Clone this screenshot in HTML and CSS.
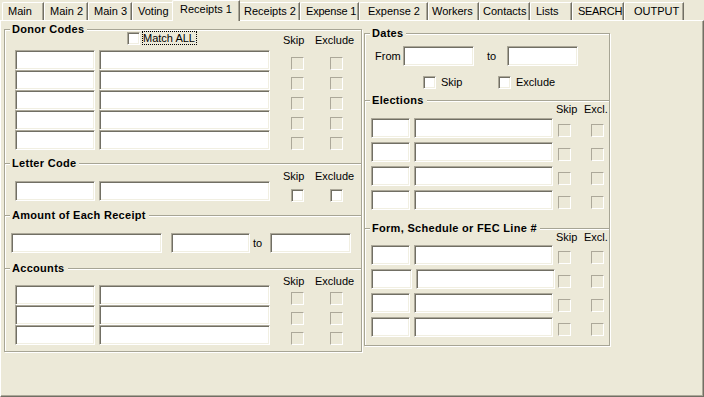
FILE: index.html
```html
<!DOCTYPE html>
<html lang="en">
<head>
  <meta charset="UTF-8" />
  <title>Receipts 1</title>
  <link rel="stylesheet" href="styles.css">
</head>
<body>

<div class="tabs">
  <div class="tab">Main</div>
  <div class="tab">Main 2</div>
  <div class="tab">Main 3</div>
  <div class="tab">Voting</div>
  <div class="tab active">Receipts 1</div>
  <div class="tab">Receipts 2</div>
  <div class="tab">Expense 1</div>
  <div class="tab">Expense 2</div>
  <div class="tab">Workers</div>
  <div class="tab">Contacts</div>
  <div class="tab">Lists</div>
  <div class="tab">SEARCH</div>
  <div class="tab">OUTPUT</div>
</div>

<div class="page">

  <!-- left column: donor codes, letter code, amount, accounts -->
  <div class="group group-left">
    <div class="legend first"><span>Donor Codes</span></div>
    <div class="lhead donor-head">
      <span></span>
      <label class="match">
        <input type="checkbox" class="check on">
        <span class="focus">Match ALL</span>
      </label>
      <span class="lbl-skip">Skip</span>
      <span class="lbl-excl">Exclude</span>
    </div>
    <div class="lrow"><input class="field code" type="text"><input class="field desc" type="text"><input type="checkbox" class="check skip"><input type="checkbox" class="check excl"></div>
    <div class="lrow"><input class="field code" type="text"><input class="field desc" type="text"><input type="checkbox" class="check skip"><input type="checkbox" class="check excl"></div>
    <div class="lrow"><input class="field code" type="text"><input class="field desc" type="text"><input type="checkbox" class="check skip"><input type="checkbox" class="check excl"></div>
    <div class="lrow"><input class="field code" type="text"><input class="field desc" type="text"><input type="checkbox" class="check skip"><input type="checkbox" class="check excl"></div>
    <div class="lrow"><input class="field code" type="text"><input class="field desc" type="text"><input type="checkbox" class="check skip"><input type="checkbox" class="check excl"></div>

    <div class="legend letter-legend"><span>Letter Code</span></div>
    <div class="lhead letter-head">
      <span></span><span></span>
      <span class="lbl-skip">Skip</span>
      <span class="lbl-excl">Exclude</span>
    </div>
    <div class="lrow letter"><input class="field code" type="text"><input class="field desc" type="text"><input type="checkbox" class="check on skip"><input type="checkbox" class="check on excl"></div>

    <div class="legend amount-legend"><span>Amount of Each Receipt</span></div>
    <div class="amount-row">
      <input class="field amt1" type="text">
      <input class="field amt2" type="text">
      <span class="to">to</span>
      <input class="field amt3" type="text">
    </div>

    <div class="legend accounts-legend"><span>Accounts</span></div>
    <div class="lhead accounts-head">
      <span></span><span></span>
      <span class="lbl-skip">Skip</span>
      <span class="lbl-excl">Exclude</span>
    </div>
    <div class="lrow"><input class="field code" type="text"><input class="field desc" type="text"><input type="checkbox" class="check skip"><input type="checkbox" class="check excl"></div>
    <div class="lrow"><input class="field code" type="text"><input class="field desc" type="text"><input type="checkbox" class="check skip"><input type="checkbox" class="check excl"></div>
    <div class="lrow"><input class="field code" type="text"><input class="field desc" type="text"><input type="checkbox" class="check skip"><input type="checkbox" class="check excl"></div>
  </div>

  <!-- right column: dates, elections, form lines -->
  <div class="group group-right">
    <div class="legend first"><span>Dates</span></div>
    <div class="dates-row">
      <span class="from">From</span>
      <input class="field date" type="text">
      <span class="date-to">to</span>
      <input class="field date" type="text">
    </div>
    <div class="dates-opts">
      <label class="opt opt-skip"><input type="checkbox" class="check on">Skip</label>
      <label class="opt"><input type="checkbox" class="check on">Exclude</label>
    </div>

    <div class="legend elections-legend"><span>Elections</span></div>
    <div class="rhead">
      <span></span><span></span>
      <span>Skip</span>
      <span>Excl.</span>
    </div>
    <div class="rrow first-row"><input class="field code" type="text"><input class="field desc" type="text"><input type="checkbox" class="check skip"><input type="checkbox" class="check excl"></div>
    <div class="rrow"><input class="field code" type="text"><input class="field desc" type="text"><input type="checkbox" class="check skip"><input type="checkbox" class="check excl"></div>
    <div class="rrow"><input class="field code" type="text"><input class="field desc" type="text"><input type="checkbox" class="check skip"><input type="checkbox" class="check excl"></div>
    <div class="rrow"><input class="field code" type="text"><input class="field desc" type="text"><input type="checkbox" class="check skip"><input type="checkbox" class="check excl"></div>

    <div class="legend form-legend"><span>Form, Schedule or FEC Line #</span></div>
    <div class="rhead">
      <span></span><span></span>
      <span>Skip</span>
      <span>Excl.</span>
    </div>
    <div class="rrow form-first"><input class="field code" type="text"><input class="field desc" type="text"><input type="checkbox" class="check skip"><input type="checkbox" class="check excl"></div>
    <div class="rrow wide"><input class="field code" type="text"><input class="field desc" type="text"><input type="checkbox" class="check skip"><input type="checkbox" class="check excl"></div>
    <div class="rrow"><input class="field code" type="text"><input class="field desc" type="text"><input type="checkbox" class="check skip"><input type="checkbox" class="check excl"></div>
    <div class="rrow"><input class="field code" type="text"><input class="field desc" type="text"><input type="checkbox" class="check skip"><input type="checkbox" class="check excl"></div>
  </div>

</div>

</body>
</html>
```

FILE: styles.css
```css
body {
  margin: 0;
  width: 704px;
  height: 397px;
  overflow: hidden;
  background-color: #ece9d8;
  color: #000;
  font-family: "Liberation Sans", Arial, sans-serif;
  font-size: 11px;
  line-height: 13px;
}

/* tab strip */
.tabs {
  display: flex;
  align-items: flex-end;
  height: 20px;
  padding-left: 2px;
}

.tab {
  box-sizing: border-box;
  height: 18px;
  padding: 2px 0 0 5px;
  border-top: 1px solid #fff;
  border-left: 1px solid #fff;
  border-right: 1px solid #716f64;
  border-top-left-radius: 2px;
  box-shadow: inset -1px 0 0 #aca899;
  white-space: nowrap;
  background-color: #ece9d8;
}

.tab.active {
  height: 21px;
  margin: 0 -2px -1px;
  padding-left: 7px;
  position: relative;
  z-index: 1;
}

/* tab widths, taken from the original form */
.tab:nth-child(1) { width: 42px; }
.tab:nth-child(2) { width: 44px; }
.tab:nth-child(3) { width: 44px; }
.tab:nth-child(4) { width: 42px; }
.tab:nth-child(5) { width: 68px; }
.tab:nth-child(6) { width: 62px; }
.tab:nth-child(7) { width: 59px; letter-spacing: -0.2px; }
.tab:nth-child(8) { width: 69px; padding-left: 8px; }
.tab:nth-child(9) { width: 51px; padding-left: 3px; }
.tab:nth-child(10) { width: 51px; padding-left: 3px; }
.tab:nth-child(11) { width: 42px; }
.tab:nth-child(12) { width: 52px; letter-spacing: -0.3px; }
.tab:nth-child(13) { width: 60px; padding-left: 9px; }

.page {
  box-sizing: border-box;
  height: 377px;
  border-top: 1px solid #fff;
  border-left: 1px solid #fff;
  border-right: 1px solid #716f64;
  border-bottom: 1px solid #716f64;
  box-shadow: inset -1px -1px 0 #aca899;
  display: flex;
  align-items: flex-start;
}

/* group boxes */
.group {
  box-sizing: border-box;
  border: 1px solid #a7a595;
  border-top: none;
  box-shadow: inset 1px 0 0 #fff, 1px 1px 0 #fff;
}

.group-left {
  width: 358px;
  margin: 8px 0 0 3px;
  padding-bottom: 6px;
}

.group-right {
  width: 246px;
  margin: 12px 0 0 2px;
  padding-bottom: 8px;
}

.legend {
  display: flex;
  height: 13px;
  font-weight: bold;
  letter-spacing: 0.3px;
  white-space: nowrap;
}

.legend::before,
.legend::after {
  content: "";
  height: 0;
  margin-top: 6px;
  border-top: 1px solid #a7a595;
  border-bottom: 1px solid #fff;
}

.legend::before {
  width: 5px;
}

.legend::after {
  flex: 1;
}

.legend span {
  padding: 0 3px 0 2px;
}

.legend.first { margin-top: -6px; }
.letter-legend { margin-top: 7px; }
.amount-legend { margin-top: 8px; }
.accounts-legend { margin-top: 9px; }
.elections-legend { margin-top: 5px; }
.form-legend { margin-top: 12px; }

/* inputs */
.field {
  box-sizing: border-box;
  height: 20px;
  margin: 0;
  padding: 0 2px;
  border: 1px solid;
  border-color: #aca899 #fff #fff #aca899;
  box-shadow: inset 1px 1px 0 #716f64, inset -1px -1px 0 #f1efe2;
  background-color: #fff;
  font: inherit;
  outline: none;
}

.check {
  -webkit-appearance: none;
  appearance: none;
  box-sizing: border-box;
  width: 13px;
  height: 13px;
  margin: 0;
  border: 1px solid;
  border-color: #aca899 #fff #fff #aca899;
  background-color: #ece9d8;
}

.check.on {
  background-color: #fff;
  box-shadow: inset 1px 1px 0 #716f64, inset -1px -1px 0 #f1efe2;
}

/* left column rows */
.lrow,
.lhead {
  display: grid;
  grid-template-columns: 84px 175px 40px 1fr;
  padding-left: 10px;
}

.lrow {
  height: 20px;
}

.lrow .code { width: 80px; }
.lrow .desc { width: 171px; }
.lrow .skip { margin: 7px 0 0 17px; }
.lrow .excl { margin: 7px 0 0 16px; }
.lrow.letter .check { margin-top: 8px; }

.lhead .lbl-skip { margin-left: 9px; }
.lhead .lbl-excl { margin-left: 1px; }

.donor-head {
  margin-top: -5px;
  height: 19px;
}

.donor-head .lbl-skip,
.donor-head .lbl-excl {
  margin-top: 3px;
}

.letter-head { height: 11px; }
.accounts-head { height: 10px; }

.match {
  display: flex;
  align-items: center;
  align-self: start;
  margin-left: 28px;
}

.match .focus {
  margin-left: 2px;
  padding-right: 1px;
  border: 1px dotted #000;
  line-height: 12px;
}

.amount-row {
  display: flex;
  align-items: center;
  margin-top: 11px;
  padding-left: 6px;
}

.amt1 { width: 151px; }
.amt2 { width: 79px; margin-left: 9px; }
.amt3 { width: 81px; }

.to {
  box-sizing: border-box;
  width: 20px;
  padding-left: 3px;
}

/* right column rows */
.dates-row {
  display: flex;
  align-items: center;
  margin-top: 6px;
  padding-left: 10px;
}

.from { width: 28px; }

.date { width: 71px; }

.date-to {
  box-sizing: border-box;
  width: 33px;
  padding-left: 13px;
}

.dates-opts {
  display: flex;
  margin-top: 10px;
  padding-left: 58px;
}

.opt {
  display: flex;
  align-items: center;
  gap: 5px;
}

.opt-skip { width: 75px; }

.rrow,
.rhead {
  display: grid;
  grid-template-columns: 43px 142px 28px 1fr;
  padding-left: 6px;
}

.rhead {
  height: 13px;
  margin-top: -4px;
}

.rrow {
  height: 20px;
  margin-top: 4px;
}

.rrow.first-row { margin-top: 2px; }
.rrow.form-first { margin-top: 1px; }

.rrow.wide {
  grid-template-columns: 45px 140px 28px 1fr;
}

.rrow .code { width: 39px; }
.rrow.wide .code { width: 41px; }
.rrow .desc { width: 139px; }
.rrow .skip { margin: 6px 0 0 2px; }
.rrow .excl { margin: 6px 0 0 7px; }
```
